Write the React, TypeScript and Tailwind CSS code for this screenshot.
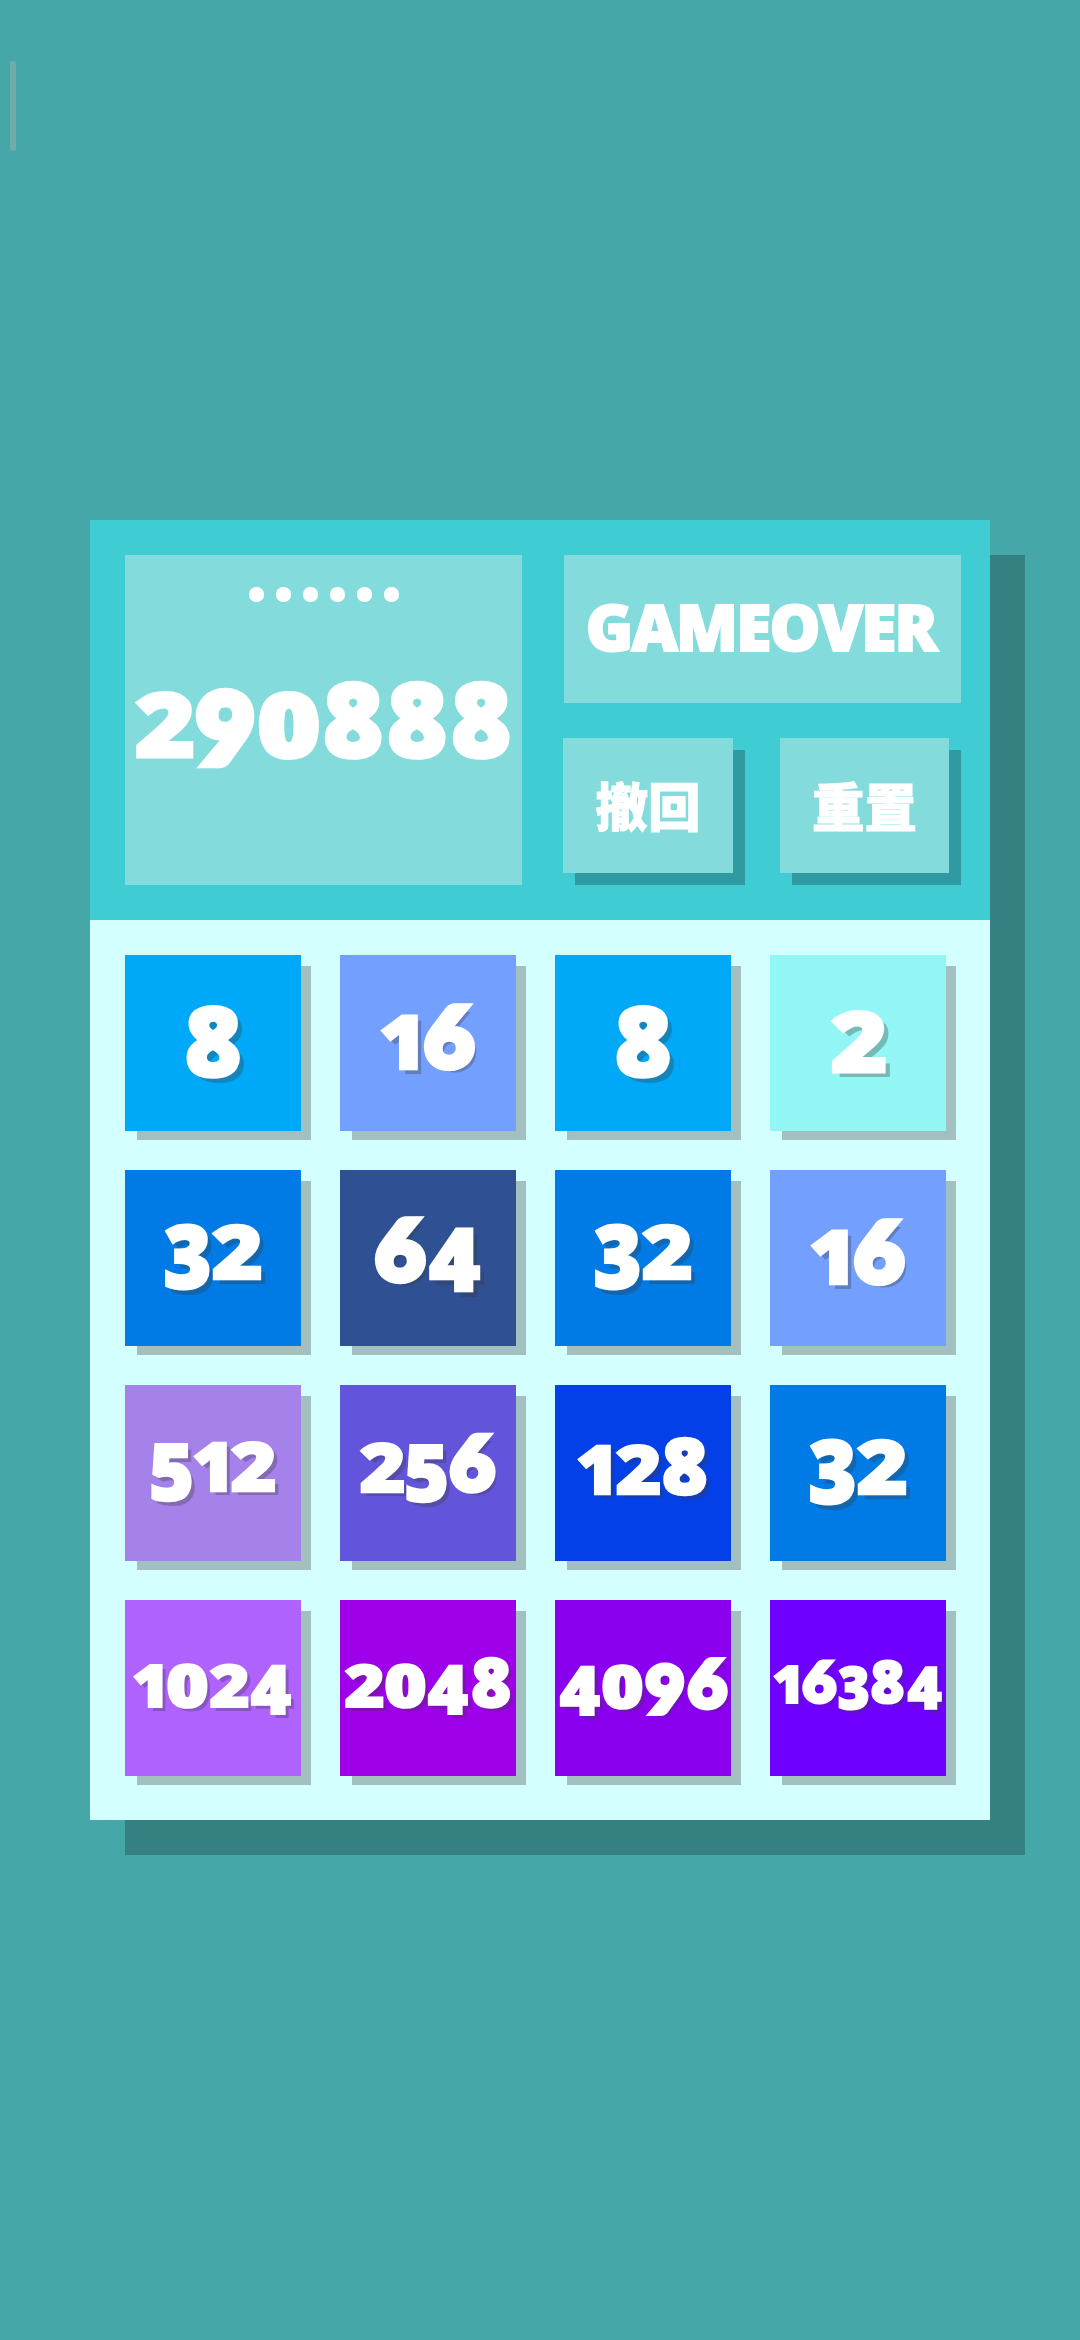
import React from "react";
import clsx from "clsx";

const digitStyles: Record<string, string> = {
  "0": "w-[0.627em] scale-x-[1.05] scale-y-[0.86] [-webkit-text-stroke:0.045em_white]",
  "1": "w-[0.485em] scale-x-[0.94] translate-x-[0.02em] scale-y-[0.87] [-webkit-text-stroke:0.035em_white]",
  "2": "w-[0.59em] scale-x-[1.01] translate-x-[0.01em] scale-y-[0.86] [-webkit-text-stroke:0.035em_white]",
  "3": "w-[0.545em] scale-x-[0.94] translate-y-[0.108em] [-webkit-text-stroke:0.035em_white]",
  "4": "w-[0.64em] scale-x-[1.01] translate-y-[0.108em] [-webkit-text-stroke:0.03em_white]",
  "5": "w-[0.555em] scale-x-[0.98] translate-y-[0.115em] [-webkit-text-stroke:0.035em_white]",
  "6": "w-[0.625em] scale-x-[0.98] scale-y-[0.95] -translate-y-[0.02em] font-['Lato'] font-black [-webkit-text-stroke:0.09em_white]",
  "8": "w-[0.627em] [-webkit-text-stroke:0.035em_white]",
  "9": "w-[0.62em] scale-x-[0.98] scale-y-[0.95] translate-y-[0.07em] font-['Lato'] font-black [-webkit-text-stroke:0.09em_white]",
};

const tileColors: Record<number, string> = {
  2: "bg-[#92f6f4] pt-[32px]",
  8: "bg-[#00a8f8] pt-[36px]",
  16: "bg-[#739fff] pt-[38px]",
  32: "bg-[#007ae5] pt-[33px]",
  64: "bg-[#2f5093] pt-[36px]",
  128: "bg-[#0440e8] pt-[41px]",
  256: "bg-[#6255db] pt-[39px]",
  512: "bg-[#a581ea] pt-[38px]",
  1024: "bg-[#b062ff] pt-[47px]",
  2048: "bg-[#9e00e9] pt-[47px]",
  4096: "bg-[#8a00ee] pt-[48px]",
  16384: "bg-[#6f00ff] pt-[52px]",
};

// font size by number of digits
const tileSizes = ["", "text-[96px]", "text-[86.5px]", "text-[77.5px]", "text-[68px]", "text-[58px]"];

const board = [
  [8, 16, 8, 2],
  [32, 64, 32, 16],
  [512, 256, 128, 32],
  [1024, 2048, 4096, 16384],
];

function Digits({ value, className }: { value: number; className?: string }) {
  return (
    <div className={clsx("flex justify-center leading-none font-extrabold", className)}>
      {String(value).split("").map((d, i) => (
        <span
          key={i}
          className={clsx(
            "flex shrink-0 justify-center origin-[50%_88.8%] [stroke-linejoin:round]",
            digitStyles[d]
          )}
        >
          {d}
        </span>
      ))}
    </div>
  );
}

function Tile({ value }: { value: number }) {
  return (
    <div
      className={clsx(
        "h-[176px] shadow-[11px_10px_0_-1px_rgba(60,60,60,0.32)]",
        tileColors[value]
      )}
    >
      <Digits
        value={value}
        className={clsx("[text-shadow:0.06em_0.06em_0_rgba(60,60,60,0.32)]", tileSizes[String(value).length])}
      />
    </div>
  );
}

function ActionButton({ label, className }: { label: string; className?: string }) {
  return (
    <button
      type="button"
      className={clsx(
        "h-[135px] bg-[#83dbdc] pb-[3px] shadow-[12px_12px_0_0_#2f9aa1] font-['Noto_Sans_CJK_SC',sans-serif] text-[52.5px] leading-none font-black [-webkit-text-stroke:1px_white]",
        className
      )}
    >
      {label}
    </button>
  );
}

export default function App() {
  return (
    <div className="relative flex h-[2340px] w-[1080px] items-center justify-center overflow-hidden bg-[#45a7a8] font-['Open_Sans',sans-serif] text-white">
      {/* Edge handle */}
      <div className="absolute left-[10px] top-[61px] h-[90px] w-[6px] rounded-full bg-[#70acab]" />

      <main className="h-[1300px] w-[900px] bg-[#d4ffff] shadow-[35px_35px_0_0_#358081]">
        {/* Score and buttons */}
        <header className="flex h-[400px] gap-[42px] bg-[#3fccd3] py-[35px] pl-[35px]">
          <section className="flex h-[330px] w-[397px] flex-col items-center bg-[#83dbdc] pt-8">
            <div className="flex gap-3">
              {[0, 1, 2, 3, 4, 5].map((i) => (
                <span key={i} className="size-[15px] rounded-[7px] bg-white" />
              ))}
            </div>
            <Digits value={290888} className="mt-[65px] text-[102px]" />
          </section>

          <section className="flex w-[397px] flex-col gap-[35px]">
            <div className="flex h-[148px] items-center justify-center bg-[#83dbdc] pr-[3px] pb-[5px] text-[64px] leading-none font-extrabold tracking-[-1.8px] [-webkit-text-stroke:2px_white]">
              GAMEOVER
            </div>
            <div className="-ml-px flex gap-[47px]">
              <ActionButton label="撤回" className="w-[170px]" />
              <ActionButton label="重置" className="w-[169px]" />
            </div>
          </section>
        </header>

        {/* Board */}
        <div className="grid grid-cols-[repeat(4,176px)] gap-[39px] p-[35px]">
          {board.flat().map((value, i) => (
            <Tile key={i} value={value} />
          ))}
        </div>
      </main>
    </div>
  );
}
